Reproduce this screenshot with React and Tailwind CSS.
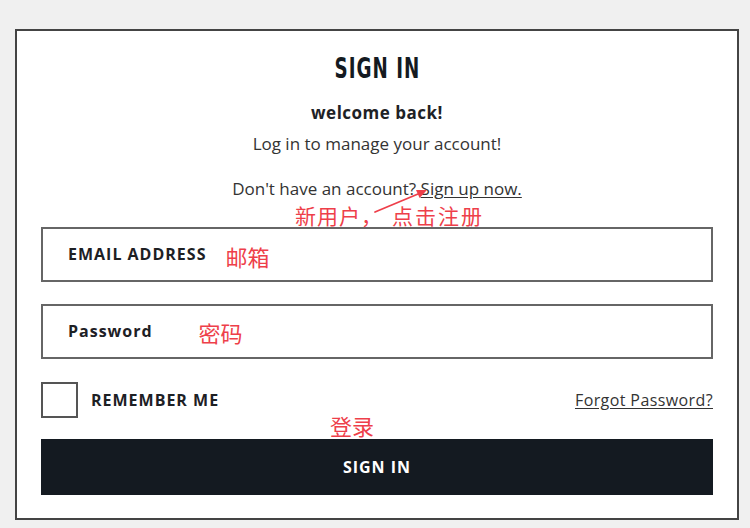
import React from "react";

export default function App() {
  return (
    <div className="w-[750px] h-[528px] bg-[#f0f0f0] pt-[29px] pl-[15px] font-['Open_Sans',sans-serif] overflow-hidden">
      <div className="relative w-[724px] border-2 border-[#444] bg-white px-[24px] pt-[23px] pb-[23px]">
        {/* arrow annotation */}
        <svg
          className="absolute left-[350px] top-[150px] pointer-events-none"
          width="70"
          height="40"
          viewBox="0 0 70 40"
        >
          <path d="M8 31 L51 13" stroke="#ee3f4a" strokeWidth="1.8" strokeLinecap="round" fill="none" />
          <polygon points="60,9 52.6,17 49,9" fill="#ee3f4a" />
        </svg>

        <div className="text-center h-[28px] leading-[28px]">
          <span className="inline-block scale-x-[0.7] font-['DejaVu_Sans_Condensed',sans-serif] font-bold text-[29px] leading-[28px] text-[#141a21] tracking-[1.5px]">
            SIGN IN
          </span>
        </div>

        <div className="mt-[19px] text-center text-[17px] leading-[24px] font-bold text-[#1e2226] tracking-[0.5px]">
          welcome back!
        </div>

        <div className="mt-[7px] text-center text-[17px] leading-[24px] text-[#333]">
          Log in to manage your account!
        </div>

        <div className="mt-[21px] text-center text-[17px] leading-[24px] text-[#333]">
          Don't have an account? <span className="underline underline-offset-2">Sign up now.</span>
        </div>

        <div className="mt-[2px] ml-[254px] flex h-[24px] text-[21px] leading-[24px] text-[#ee3f4a] font-['Noto_Sans_CJK_SC',sans-serif] whitespace-nowrap">
          <span className="tracking-[1px]">新用户，</span>
          <span className="ml-[9px] tracking-[2px]">点击注册</span>
        </div>

        <div className="flex items-start h-[55px] border-2 border-[#666] pl-[25px]">
          <span className="mt-[13px] text-[16px] leading-[24px] font-bold tracking-[1px] text-[#1d2024]">
            EMAIL ADDRESS
          </span>
          <span className="ml-[19px] mt-[15px] text-[22px] leading-[24px] text-[#ee3f4a] font-['Noto_Sans_CJK_SC',sans-serif]">
            邮箱
          </span>
        </div>

        <div className="mt-[22px] flex items-start h-[55px] border-2 border-[#666] pl-[25px]">
          <span className="mt-[13px] text-[16px] leading-[24px] font-bold tracking-[1px] text-[#1d2024]">
            Password
          </span>
          <span className="ml-[46px] mt-[14px] text-[22px] leading-[24px] text-[#ee3f4a] font-['Noto_Sans_CJK_SC',sans-serif]">
            密码
          </span>
        </div>

        <div className="mt-[23px] flex items-center h-[36px]">
          <div className="w-[37px] h-[36px] border-2 border-[#555] bg-white" />
          <span className="ml-[13px] text-[16px] leading-[24px] font-bold tracking-[1px] text-[#1d2024]">
            REMEMBER ME
          </span>
          <span className="ml-auto text-[16px] leading-[24px] text-[#333] underline underline-offset-2 tracking-[0.4px]">
            Forgot Password?
          </span>
        </div>

        <div className="ml-[289px] h-[15px] text-[22px] leading-[15px] text-[#ee3f4a] font-['Noto_Sans_CJK_SC',sans-serif]">
          登录
        </div>

        <div className="mt-[6px] h-[56px] bg-[#141a21] flex items-center justify-center">
          <span className="text-[16px] leading-[24px] font-bold tracking-[1px] text-white">SIGN IN</span>
        </div>
      </div>
    </div>
  );
}
